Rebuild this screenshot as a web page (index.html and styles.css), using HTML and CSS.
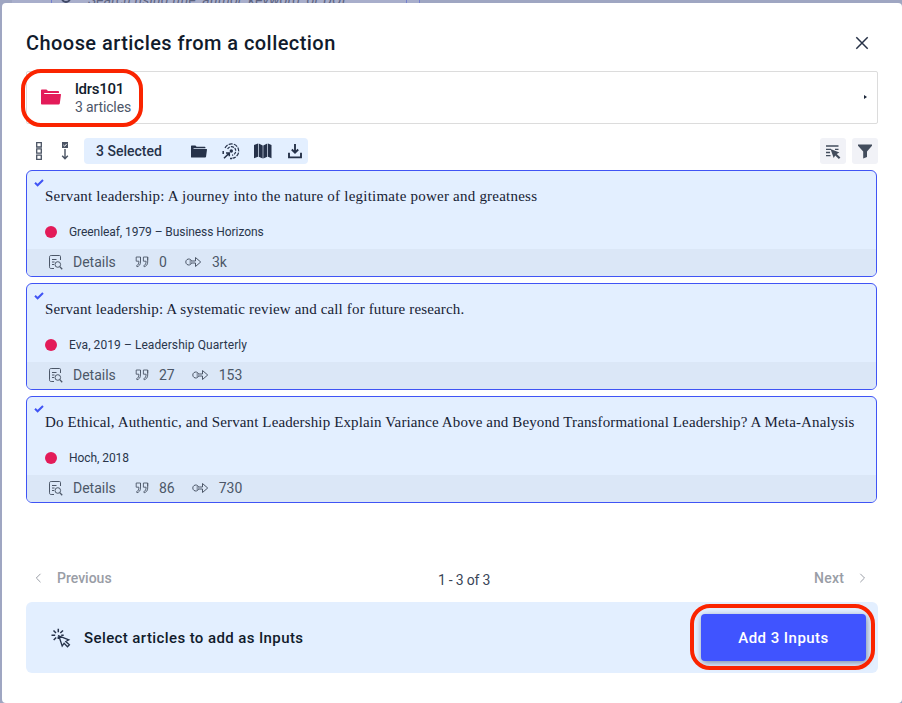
FILE: index.html
```html
<!DOCTYPE html>
<html lang="en">
<head>
<meta charset="utf-8">
<title>Choose articles from a collection</title>
<link rel="stylesheet" href="styles.css">
</head>
<body>
<svg class="defs" aria-hidden="true">
  <symbol id="check" viewBox="0 0 10 8"><path d="M1 3.8 3.6 6.3 9 1" fill="none" stroke="currentColor" stroke-width="2"/></symbol>
  <symbol id="details" viewBox="0 0 15 16"><path d="M6 14.500H3.200C2 14.500 1.500 14 1.500 12.800V3.200C1.500 2 2 1.500 3.200 1.500H11.500C12.300 1.500 12.500 2 12.500 2.600V6M4 5.500H8.500M4 8H6.500M4 10.500H6" fill="none" stroke="currentColor"/><circle cx="9.800" cy="10.500" r="2.800" fill="none" stroke="currentColor"/><path d="m11.800 12.600 2.400 2.600" stroke="currentColor" stroke-width="1.300"/></symbol>
  <symbol id="quote" viewBox="0 0 14 12"><path d="M5.500 4.200V1H1.200V5.200H3.900M5.500 1V6C5.500 8.600 4.300 10 2 10.800L1.600 9.600C3.100 9 3.900 8 3.900 5.200M12.700 4.200V1H8.400V5.200H11.100M12.700 1V6C12.700 8.600 11.500 10 9.200 10.800L8.800 9.600C10.300 9 11.100 8 11.100 5.200" fill="none" stroke="currentColor" stroke-width=".9"/></symbol>
  <symbol id="cites" viewBox="0 0 17 12"><path d="M6.500 4.700A3 3 0 1 0 6.500 7.300M4.500 5H10.500V1.500L15.700 6 10.500 10.500V7H4.500" fill="none" stroke="currentColor" stroke-width="1"/></symbol>
  <symbol id="folder" viewBox="0 0 20 16"><path d="M0 1.200Q0 .5.800.5H5.500L7 2H17.200Q18 2 18 2.800V4H3.200V5H19.600Q20 5 20 5.600L18.800 14.600Q18.600 15.500 17.600 15.500H.8Q0 15.500 0 14.700Z" fill="currentColor"/></symbol>
</svg>

<div class="backdrop">
  <div class="search"><span class="lens"></span><span>Search using title, author, keyword, or DOI</span></div>
</div>

<main class="modal">
  <header class="head">
    <h1>Choose articles from a collection</h1>
    <svg class="close" viewBox="0 0 14 14"><path d="M1.300 1.300 12.700 12.700M12.700 1.300 1.300 12.700" stroke="currentColor" stroke-width="1.500"/></svg>
  </header>

  <section class="collection">
    <svg class="folder-pink" viewBox="0 0 20 16" preserveAspectRatio="none"><use href="#folder"/></svg>
    <div>
      <div class="name">ldrs101</div>
      <div class="count">3 articles</div>
    </div>
    <i class="caret"></i>
    <span class="ring ring-collection"></span>
  </section>

  <div class="toolbar">
    <svg class="stack" viewBox="0 0 8 20"><path d="M1.700 1.700H6.300V6H1.700ZM1.700 7.900H6.300V12.200H1.700ZM1.700 14.100H6.300V18.300H1.700Z" fill="none" stroke="currentColor" stroke-width="1.300"/></svg>
    <svg class="down" viewBox="0 0 8 20"><path d="M1 1H7V7H1Z" fill="currentColor"/><path d="m2.400 4 1.200 1.200L5.800 2.800" fill="none" stroke="#fff" stroke-width="1"/><path d="M4 8V17.500M1.200 14.700 4 17.800 6.800 14.700" fill="none" stroke="currentColor" stroke-width="1.400"/></svg>
    <div class="selected">
      <span class="sel-text">3 Selected</span>
      <svg class="i-folder" viewBox="0 0 20 16" preserveAspectRatio="none"><use href="#folder"/></svg>
      <svg class="i-target" viewBox="0 0 18 18"><g fill="none" stroke="currentColor" stroke-width="1.200"><path d="M3 6A7.200 7.200 0 1 1 10.500 16.200" stroke-dasharray="4 1.200"/><path d="M5.600 7A4.300 4.300 0 1 1 10 13.200" stroke-dasharray="3 1"/><path d="M2 16.300 7 11.400M4 11H7.300V14.300M1.200 9V12M8 16.500H10" stroke-width="1.500"/></g><circle cx="9.300" cy="9" r="1.700" fill="currentColor"/></svg>
      <svg class="i-map" viewBox="0 0 18 16"><path d="M0 2 4 .5V13.800L0 15.300ZM4.700.5 8.700 2.500V15.500L4.700 13.800ZM9.300 2.500 13.300.5V13.800L9.300 15.500ZM14 .5 17.500 2V15.300L14 13.800Z" fill="currentColor"/></svg>
      <svg class="i-down" viewBox="0 0 14 15"><path d="M7 0V8M3.800 5.500 7 8.700 10.200 5.500M1 8.800V13.400H13V8.800" fill="none" stroke="currentColor" stroke-width="1.900"/></svg>
    </div>
    <button class="tool tool-first"><svg width="15" height="14" viewBox="0 0 15 14"><path d="M0 1H12.500M0 4.300H5M9 4.300H12.500M0 7.500H4M0 10.700H4.500" stroke="currentColor" stroke-width="1.300"/><path d="m4.500 4 8.900 3.500-2.700 1.500 3.700 3.500-1.500 1.500L9.200 10.500 7.700 13Z" fill="currentColor"/></svg></button>
    <button class="tool"><svg width="14" height="15" viewBox="0 0 14 15"><path d="M0 .5H14V1.800L9 7.500V13L5.200 14.500V7.500L0 1.800Z" fill="currentColor"/></svg></button>
  </div>

  <section class="list">
    <article class="card">
      <svg class="tick"><use href="#check"/></svg>
      <h2>Servant leadership: A journey into the nature of legitimate power and greatness</h2>
      <p class="meta"><i class="dot"></i>Greenleaf, 1979 – Business Horizons</p>
      <footer><svg class="f-details"><use href="#details"/></svg><span class="label">Details</span><svg class="f-quote"><use href="#quote"/></svg><span class="num">0</span><svg class="f-cites"><use href="#cites"/></svg><span>3k</span></footer>
    </article>
    <article class="card">
      <svg class="tick"><use href="#check"/></svg>
      <h2>Servant leadership: A systematic review and call for future research.</h2>
      <p class="meta"><i class="dot"></i>Eva, 2019 – Leadership Quarterly</p>
      <footer><svg class="f-details"><use href="#details"/></svg><span class="label">Details</span><svg class="f-quote"><use href="#quote"/></svg><span class="num">27</span><svg class="f-cites"><use href="#cites"/></svg><span>153</span></footer>
    </article>
    <article class="card">
      <svg class="tick"><use href="#check"/></svg>
      <h2>Do Ethical, Authentic, and Servant Leadership Explain Variance Above and Beyond Transformational Leadership? A Meta-Analysis</h2>
      <p class="meta"><i class="dot"></i>Hoch, 2018</p>
      <footer><svg class="f-details"><use href="#details"/></svg><span class="label">Details</span><svg class="f-quote"><use href="#quote"/></svg><span class="num">86</span><svg class="f-cites"><use href="#cites"/></svg><span>730</span></footer>
    </article>
  </section>

  <nav class="pager">
    <span class="prev"><svg width="7" height="10" viewBox="0 0 7 10"><path d="M5.500.8 1.300 5 5.500 9.200" fill="none" stroke="currentColor" stroke-width="1"/></svg>Previous</span>
    <span class="range">1 - 3 of 3</span>
    <span class="next">Next<svg width="7" height="10" viewBox="0 0 7 10"><path d="M1.300.8 5.500 5 1.300 9.200" fill="none" stroke="currentColor" stroke-width="1"/></svg></span>
  </nav>

  <section class="action">
    <svg class="pointer" viewBox="0 0 20 20"><g fill="none" stroke="currentColor" stroke-width="1.500"><path d="M7.300.8V4.300M7.300 8.500V11M.5 7.300H4.200M10.200 7.300H12.700M2.500 2.500 5 5M12 2.500 9.300 5M2.700 12 5.200 9.500"/><path d="m7.800 7.800 10 4-3 1.700 3.600 3.300-1.900 1.900-3.400-3.500L11.200 18Z" stroke-width="1.300"/></g></svg>
    <span class="prompt">Select articles to add as Inputs</span>
    <button class="add">Add 3 Inputs</button>
    <span class="ring ring-add"></span>
  </section>
</main>
</body>
</html>
```
FILE: styles.css
```css
* { box-sizing: border-box; margin: 0; padding: 0; }
body {
  width: 902px; height: 703px; overflow: hidden; position: relative;
  background: #9fa6c2;
  font-family: Roboto, "Liberation Sans", sans-serif;
  color: #1b2639;
}
svg { display: block; flex: none; }
.defs { position: absolute; width: 0; height: 0; }
button { border: 0; font: inherit; }

.backdrop {
  height: 3px; overflow: hidden; padding-left: 51px;
  background: linear-gradient(90deg, transparent 12px, #a8aecb 12px 419px, #7480cf 419px 420px, transparent 420px);
}
.search {
  display: flex; align-items: flex-end; height: 3px; width: 356px; padding-left: 9px;
  border-left: 1px solid #7480cf; border-right: 1px solid #7480cf;
  font-size: 14px; font-style: italic; line-height: 6px; color: #5c6380;
}
.search span:last-child { letter-spacing: .2px; white-space: nowrap; margin-left: 17px; }
.lens { flex: none; width: 10px; height: 10px; border: 2px solid #3f4866; border-radius: 50%; }

.modal {
  margin-left: 2px; height: 700px; padding: 0 24px;
  background: #fff; border-radius: 4px;
}
.head { display: flex; justify-content: space-between; align-items: center; height: 68px; padding: 12px 9px 0 0; }
h1 { font-size: 20px; font-weight: 500; letter-spacing: .44px; line-height: 24px; color: #111b2c; }
.close { width: 14px; height: 14px; color: #273247; }

.collection {
  position: relative; display: flex; align-items: center; height: 53px;
  border: 1px solid #dcdcdc; border-radius: 2px; padding: 0 10px 0 14px;
}
.folder-pink { width: 20px; height: 16px; margin: 0 14px 2px 0; color: #e31b59; }
.name { font-size: 15px; font-weight: 500; line-height: 18px; letter-spacing: -.25px; color: #111b2c; }
.count { font-size: 14px; line-height: 18px; letter-spacing: -.14px; color: #4c5668; }
.caret { margin: 0 0 2px auto; border: 2px solid transparent; border-left: 3px solid #1b2639; border-right: 0; }
.ring { position: absolute; border: 4px solid #fa2400; pointer-events: none; }
.ring-collection { left: -6px; top: -3px; width: 122px; height: 58px; border-radius: 20px; }

.toolbar { display: flex; align-items: center; height: 26px; margin-top: 14px; color: #4a5363; }
.stack { width: 8px; height: 20px; margin-left: 9px; }
.down { width: 8px; height: 20px; margin-left: 18px; }
.selected {
  display: flex; align-items: center; width: 224px; height: 26px; margin-left: 15px; padding-left: 12px;
  border-radius: 4px; background: #e3efff; color: #26324a;
}
.sel-text { width: 95px; font-size: 14px; font-weight: 500; }
.i-folder { width: 16px; height: 13px; }
.i-target { width: 18px; height: 18px; margin-left: 15px; }
.i-map { width: 18px; height: 16px; margin-left: 14px; }
.i-down { width: 14px; height: 15px; margin-left: 16px; }
.tool { display: grid; place-items: center; width: 26px; height: 26px; border-radius: 3px; background: #f1f2f7; color: #434d5d; }
.tool-first { margin: 0 6px 0 auto; padding: 2px 0 0 1px; }

.list { display: grid; gap: 6px; width: 851px; margin-top: 6px; }
.card {
  position: relative; display: flex; flex-direction: column; height: 107px; overflow: hidden;
  border: 1px solid #4054f5; border-radius: 6px; background: #e3efff;
}
.tick { position: absolute; left: 7px; top: 8px; width: 10px; height: 8px; color: #4054f5; }
h2 {
  margin: 15px 0 0 18px; white-space: nowrap; color: #172234;
  font: 400 15px/20px "Liberation Serif", serif; letter-spacing: .225px;
}
.card:nth-child(2) h2 { letter-spacing: .15px; }
.card:nth-child(3) h2 { letter-spacing: .128px; }
.meta { display: flex; align-items: center; margin: 18px 0 0 18px; font-size: 12px; line-height: 16px; letter-spacing: -.07px; color: #2a364b; }
.card:nth-child(2) .meta { letter-spacing: .07px; }
.dot { width: 12px; height: 12px; margin-right: 12px; border-radius: 50%; background: #e31b59; }
.card footer {
  display: flex; align-items: center; height: 27px; margin-top: auto; padding: 0 0 2px 21px;
  background: #dbe7f7; font-size: 14px; color: #4c5768;
}
.f-details { width: 15px; height: 16px; margin-right: 10px; }
.f-quote { width: 14px; height: 12px; margin: 0 10px 0 19px; }
.f-cites { width: 17px; height: 12px; margin: 0 10px 0 17px; }
.label { width: 43px; }
.num { min-width: 9px; }

.pager { display: grid; grid-template-columns: 1fr auto 1fr; align-items: center; height: 22px; margin-top: 64px; font-size: 14px; color: #999da6; }
.prev, .next { display: flex; align-items: center; font-weight: 500; }
.prev { padding-left: 9px; gap: 15px; }
.next { justify-content: flex-end; gap: 15px; padding-right: 12px; letter-spacing: .2px; }
.range { padding-top: 4px; padding-left: 24px; letter-spacing: -.2px; color: #3a4557; }

.action {
  position: relative; display: flex; align-items: center; height: 71px; margin-top: 13px;
  padding: 0 12px 0 25px; border-radius: 6px; background: #e3efff;
}
.pointer { width: 20px; height: 20px; color: #26324a; }
.prompt { margin-left: 13px; font-size: 15px; font-weight: 500; letter-spacing: .4px; color: #111b2c; }
.add {
  width: 165px; height: 47px; margin-left: auto; border-radius: 4px; background: #4054ff; color: #fff;
  font-size: 15px; font-weight: 500; letter-spacing: .46px; box-shadow: 1px 2px 6px rgba(20, 40, 80, .5);
}
.ring-add { left: 664px; top: 2px; width: 185px; height: 66px; border-radius: 20px; }
```
